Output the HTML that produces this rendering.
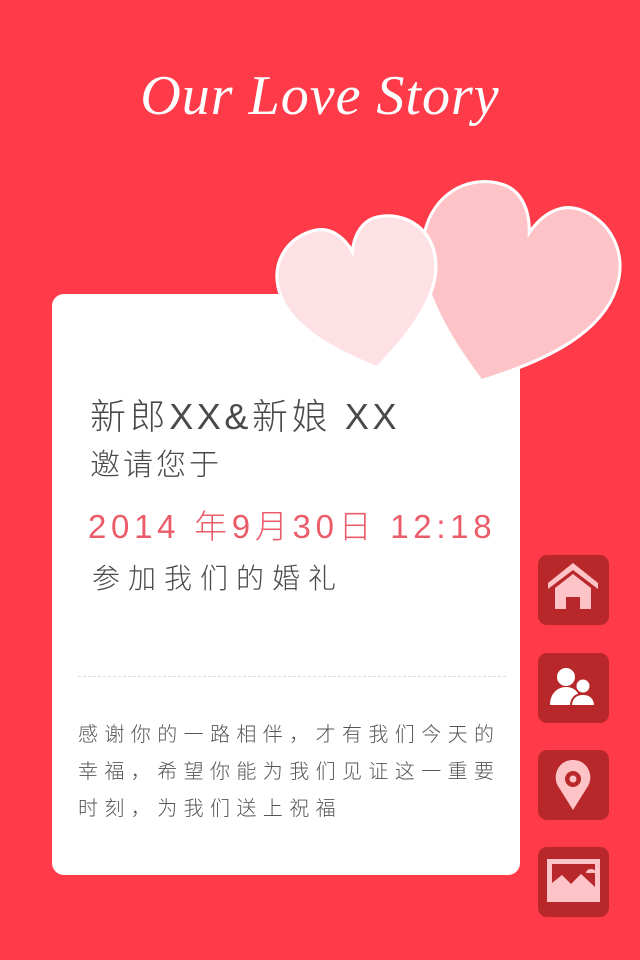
<!DOCTYPE html>
<html><head><meta charset="utf-8"><style>
body{margin:0;width:640px;height:960px;background:#ff3b4a;position:relative;overflow:hidden;font-family:"Liberation Sans","Noto Sans CJK SC",sans-serif}
.title{position:absolute;top:64px;left:0;width:640px;text-align:center;color:#fff;font-family:"Liberation Serif",serif;font-style:italic;font-size:56px;letter-spacing:1px}
.card{position:absolute;left:52px;top:294px;width:468px;height:581px;background:#fff;border-radius:12px}
.t{position:absolute;color:#555;white-space:nowrap;font-family:"Liberation Sans","Noto Sans CJK SC",sans-serif;font-weight:300}
.btn{position:absolute;left:538px;width:71px;height:70px;background:#b8282b;border-radius:9px}
.btn svg{position:absolute;left:0;top:0}
.dash{position:absolute;left:78px;top:676px;width:428px;border-top:1.5px dashed #ddd}
</style></head><body>
<div class="title">Our Love Story</div>
<div class="card"></div>
<svg style="position:absolute;left:0;top:0" width="640" height="960">
<path transform="translate(410,192) rotate(18 100 100) scale(2.0 2.1)" d="M50 92 C20 72 0 52 0 30 C0 12 14 0 30 0 C40 0 47 8 50 18 C53 8 60 0 70 0 C86 0 100 12 100 30 C100 52 80 72 50 92Z" fill="#fec3c7" stroke="#fff" stroke-width="1.5"/>
<path transform="translate(282,222) rotate(-12 80 75) scale(1.6 1.6)" d="M50 92 C20 72 0 52 0 30 C0 12 14 0 30 0 C40 0 47 8 50 18 C53 8 60 0 70 0 C86 0 100 12 100 30 C100 52 80 72 50 92Z" fill="#fee1e4" stroke="#fff" stroke-width="2"/>
</svg>
<div class="t" style="left:90px;top:388px;font-size:36px;letter-spacing:3.6px;color:#4a4a4a">新郎XX&amp;新娘 XX</div>
<div class="t" style="left:90px;top:440px;font-size:30px;letter-spacing:3px;color:#4a4a4a">邀请您于</div>
<div class="t" style="left:88px;top:500px;font-size:33px;color:#eb5c69;letter-spacing:4.7px">2014 年9月30日 12:18</div>
<div class="t" style="left:92px;top:557px;font-size:28px;letter-spacing:8px;color:#4a4a4a">参加我们的婚礼</div>
<div class="dash"></div>
<div class="t" style="left:78px;top:717px;font-size:20px;line-height:37px;letter-spacing:6.4px;width:440px;white-space:normal;color:#555">感谢你的一路相伴，才有我们今天的幸福，希望你能为我们见证这一重要时刻，为我们送上祝福</div>
<div class="btn" style="top:555px"><svg width="71" height="70"><path d="M10 28 L35 8 L60 28 L60 34 L35 15 L10 34Z" fill="#fec3c7"/><path d="M17 33 L35 19 L53 33 L53 54 L42 54 L42 42 L28 42 L28 54 L17 54Z" fill="#fec3c7"/></svg></div>
<div class="btn" style="top:653px"><svg width="71" height="70"><circle cx="28" cy="24" r="9" fill="#fff"/><path d="M12 52 C12 40 20 34 28 34 C34 34 38 37 40 40 L36 52Z" fill="#fff"/><circle cx="45" cy="33" r="7.5" fill="#fff" stroke="#b8282b" stroke-width="2"/><path d="M33 53 C33 45 38 41 45 41 C52 41 57 45 57 53Z" fill="#fff" stroke="#b8282b" stroke-width="2"/></svg></div>
<div class="btn" style="top:750px"><svg width="71" height="70"><path d="M35 60 L20 36 C14 26 20 10 35 10 C50 10 56 26 50 36Z" fill="#fec3c7"/><circle cx="35" cy="29" r="8" fill="#b8282b"/><circle cx="35" cy="29" r="3.5" fill="#fec3c7"/></svg></div>
<div class="btn" style="top:847px"><svg width="71" height="70"><rect x="9" y="12" width="53" height="43" fill="#fec3c7"/><rect x="14" y="17" width="43" height="27" fill="#b8282b"/><path d="M14 44 L14 36 L24 28 L33 37 L43 27 L57 40 L57 44Z" fill="#fec3c7"/><path d="M48 26 A5 4 0 0 1 58 26Z" fill="#fec3c7"/></svg></div>
</body></html>
